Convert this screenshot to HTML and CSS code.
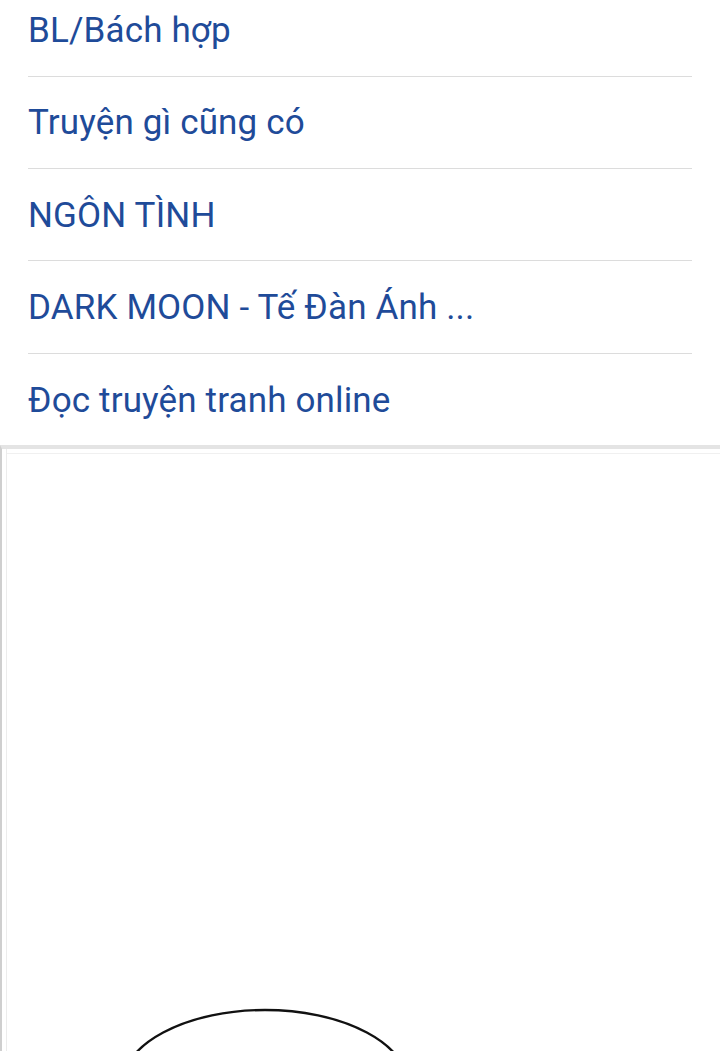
FILE: index.html
```html
<!DOCTYPE html>
<html lang="vi">
<head>
<meta charset="utf-8">
<link rel="stylesheet" href="styles.css">
</head>
<body>
<div class="menu">
  <ul class="links">
    <li class="item"><a href="#">BL/Bách hợp</a></li>
    <li class="item"><a href="#">Truyện gì cũng có</a></li>
    <li class="item"><a href="#">NGÔN TÌNH</a></li>
    <li class="item"><a href="#">DARK MOON - Tế Đàn Ánh ...</a></li>
    <li class="item"><a href="#">Đọc truyện tranh online</a></li>
  </ul>
</div>
<div class="page">
  <svg class="art" viewBox="0 0 718 602" width="718" height="602">
    <ellipse cx="263" cy="638" rx="144" ry="77" fill="none" stroke="#111" stroke-width="2.4"/>
  </svg>
</div>
</body>
</html>
```
FILE: styles.css
```css
html, body {
  margin: 0;
  padding: 0;
  background: #fff;
}
body {
  width: 720px;
  height: 1051px;
  overflow: hidden;
  font-family: Roboto, "Noto Sans", sans-serif;
}
.menu {
  padding: 0 28px;
  height: 445px;
  overflow: hidden;
}
.links {
  list-style: none;
  margin: -15.5px 0 0 0;
  padding: 0;
}
.item {
  height: 92.3px;
  box-sizing: border-box;
  display: flex;
  align-items: center;
  padding-top: 1px;
  border-bottom: 1px solid #dcdcdc;
}
.item:last-child {
  border-bottom: none;
}
.item a {
  color: #1f4b99;
  text-decoration: none;
  font-size: 35px;
  line-height: 1;
  letter-spacing: 0.15px;
}
.page {
  border-top: 4px solid #e4e4e4;
  border-left: 2px solid #cfcfcf;
  height: 602px;
  box-shadow: inset 4px 0 0 #fff, inset 5px 0 0 #ececec, inset 0 4px 0 #fff, inset 0 5px 0 #f0f0f0;
}
.art {
  display: block;
}
```
